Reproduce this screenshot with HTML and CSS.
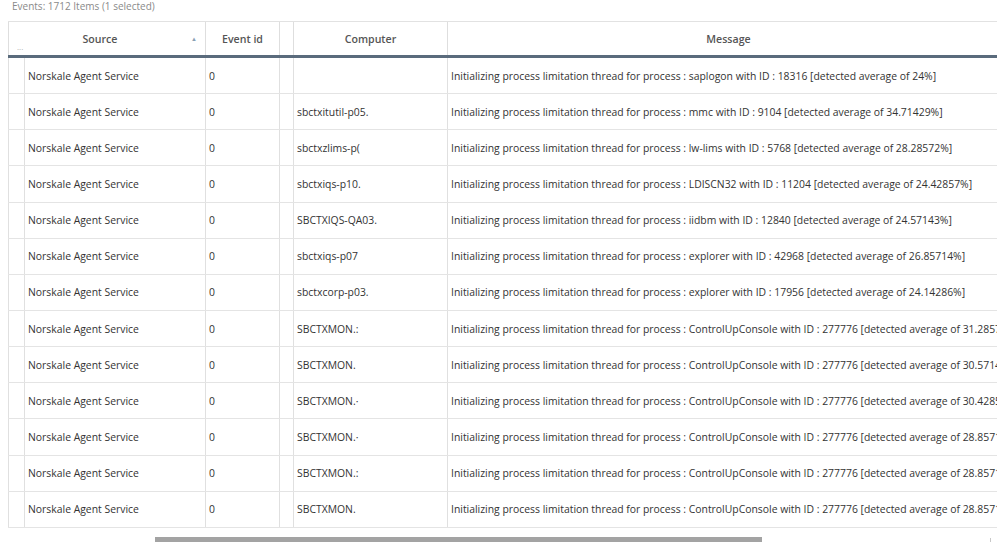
FILE: index.html
```html
<!DOCTYPE html>
<html>
<head>
<meta charset="utf-8">
<link rel="stylesheet" href="styles.css">
</head>
<body>
<div class="page">
  <div class="caption">Events: 1712 Items (1 selected)</div>
  <div class="grid">
    <div class="head">
      <div class="hc hc-source"><span class="dots">...</span><span class="htext">Source</span><span class="sort">&#9650;</span></div>
      <div class="hc">Event id</div>
      <div class="hc"></div>
      <div class="hc">Computer</div>
      <div class="hc hc-msg">Message</div>
    </div>
    <div class="bar"></div>
    <div class="body" id="body"></div>
  </div>
  <div class="hscroll"><div class="thumb"></div><span class="arrow"></span></div>
</div>
<script>
var rows = [
  ["", "Initializing process limitation thread for process : saplogon with ID : 18316 [detected average of 24%]"],
  ["sbctxitutil-p05.", "Initializing process limitation thread for process : mmc with ID : 9104 [detected average of 34.71429%]"],
  ["sbctxzlims-p(", "Initializing process limitation thread for process : lw-lims with ID : 5768 [detected average of 28.28572%]"],
  ["sbctxiqs-p10.", "Initializing process limitation thread for process : LDISCN32 with ID : 11204 [detected average of 24.42857%]"],
  ["SBCTXIQS-QA03.", "Initializing process limitation thread for process : iidbm with ID : 12840 [detected average of 24.57143%]"],
  ["sbctxiqs-p07", "Initializing process limitation thread for process : explorer with ID : 42968 [detected average of 26.85714%]"],
  ["sbctxcorp-p03.", "Initializing process limitation thread for process : explorer with ID : 17956 [detected average of 24.14286%]"],
  ["SBCTXMON.:", "Initializing process limitation thread for process : ControlUpConsole with ID : 277776 [detected average of 31.28571%]"],
  ["SBCTXMON.", "Initializing process limitation thread for process : ControlUpConsole with ID : 277776 [detected average of 30.57143%]"],
  ["SBCTXMON.\u00b7", "Initializing process limitation thread for process : ControlUpConsole with ID : 277776 [detected average of 30.42857%]"],
  ["SBCTXMON.\u00b7", "Initializing process limitation thread for process : ControlUpConsole with ID : 277776 [detected average of 28.85714%]"],
  ["SBCTXMON.:", "Initializing process limitation thread for process : ControlUpConsole with ID : 277776 [detected average of 28.85714%]"],
  ["SBCTXMON.", "Initializing process limitation thread for process : ControlUpConsole with ID : 277776 [detected average of 28.85714%]"]
];
var body = document.getElementById('body');
rows.forEach(function (r) {
  var row = document.createElement('div');
  row.className = 'row';
  var cells = ['', 'Norskale Agent Service', '0', '', r[0], r[1]];
  cells.forEach(function (t, i) {
    var c = document.createElement('div');
    c.className = 'cell c' + i;
    c.textContent = t;
    row.appendChild(c);
  });
  body.appendChild(row);
});
</script>
</body>
</html>
```
FILE: styles.css
```css
html, body {
  margin: 0;
  padding: 0;
  background: #ffffff;
}
.page {
  width: 1000px;
  height: 542px;
  overflow: hidden;
  font-family: "Open Sans", "Noto Sans", sans-serif;
  font-size: 10.4px;
  color: #333333;
  position: relative;
}
.caption {
  height: 21px;
  line-height: 12px;
  padding-left: 12px;
  color: #8a8a8a;
  font-size: 10px;
  box-sizing: border-box;
}
.grid {
  margin-left: 8px;
  width: 989px;
}
.head {
  display: grid;
  grid-template-columns: 197px 74px 14px 154px 550px;
  height: 34px;
  border-top: 1px solid #e2e2e2;
  box-sizing: border-box;
}
.hc {
  border-left: 1px solid #dedede;
  display: flex;
  align-items: center;
  justify-content: center;
  font-weight: 600;
  color: #555555;
  font-size: 10.6px;
  position: relative;
}
.hc-source {
  justify-content: flex-start;
}
.hc-source .htext {
  width: 182px;
  text-align: center;
}
.dots {
  position: absolute;
  left: 8px;
  top: 19px;
  font-size: 8px;
  color: #b0b0b0;
  font-weight: 400;
}
.sort {
  position: absolute;
  right: 8px;
  top: 13px;
  font-size: 6px;
  color: #8aa0b4;
}
.hc-msg {
  padding-left: 12px;
}
.bar {
  height: 3px;
  background: #5a6b7c;
}
.row {
  display: grid;
  grid-template-columns: 16px 181px 74px 14px 154px 550px;
  height: 36.15px;
  box-sizing: border-box;
  border-bottom: 1px solid #e4e4e4;
}
.cell {
  border-left: 1px solid #e0e0e0;
  padding-left: 3px;
  display: flex;
  align-items: center;
  white-space: nowrap;
  overflow: hidden;
}
.hscroll {
  position: absolute;
  left: 0;
  bottom: 0;
  width: 1000px;
  height: 6px;
}
.thumb {
  position: absolute;
  left: 155px;
  top: 1px;
  width: 607px;
  height: 5px;
  background: #a3a3a3;
}
.arrow {
  position: absolute;
  right: 9px;
  top: 2px;
  width: 1px;
  height: 4px;
  background: #c8c8c8;
}
```
